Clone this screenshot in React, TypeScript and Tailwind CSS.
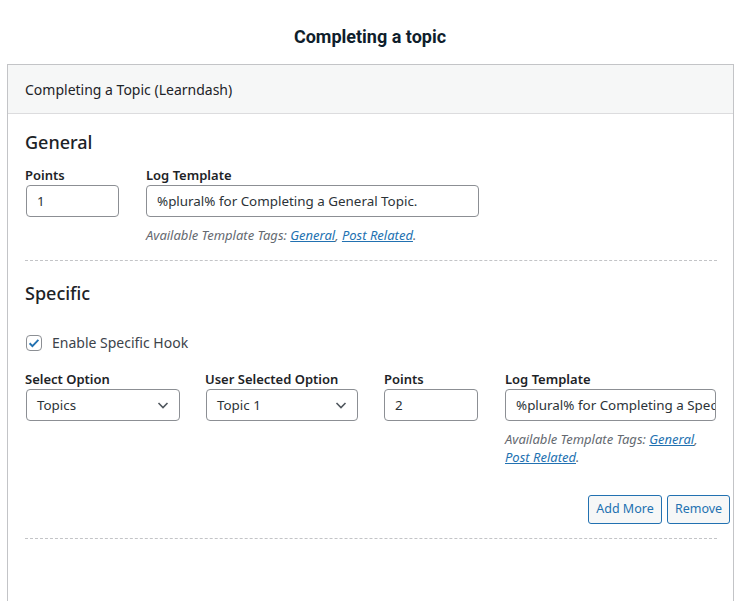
import React, { useState } from 'react';

const body = { fontFamily: '"Noto Sans", "Open Sans", sans-serif' };

const Chevron: React.FC = () => (
  <svg width="16" height="16" viewBox="0 0 16 16" className="text-[#50575e]">
    <path d="M3.5 6l4.5 4.5L12.5 6" fill="none" stroke="currentColor" strokeWidth="1.6" />
  </svg>
);

const Label: React.FC<{ children: React.ReactNode }> = ({ children }) => (
  <div className="text-[13px] font-semibold text-[#1d2327] leading-[18px]">{children}</div>
);

const TextBox: React.FC<{ value: string; className?: string }> = ({ value, className }) => (
  <div
    className={`h-[32px] border border-[#8c8f94] rounded-[4px] bg-white flex items-center px-[10px] text-[13.4px] text-[#2c3338] overflow-hidden whitespace-nowrap ${className ?? ''}`}
  >
    {value}
  </div>
);

const SelectBox: React.FC<{ value: string; className?: string }> = ({ value, className }) => (
  <div
    className={`h-[32px] border border-[#8c8f94] rounded-[4px] bg-white flex items-center justify-between pl-[10px] pr-[8px] text-[13.4px] text-[#2c3338] ${className ?? ''}`}
  >
    <span>{value}</span>
    <Chevron />
  </div>
);

const Tags: React.FC = () => (
  <p className="italic text-[13px] leading-[18px] text-[#646970]">
    Available Template Tags: <a className="text-[#2271b1] underline">General</a>,{' '}
    <a className="text-[#2271b1] underline">Post Related</a>.
  </p>
);

const App: React.FC = () => {
  const [enabled, setEnabled] = useState(true);

  return (
    <div className="w-[740px] h-[601px] bg-white overflow-hidden" style={body}>
      <h1
        className="text-center text-[18px] font-bold text-[#0f1e2c] pt-[23px] h-[64px]"
        style={{ fontFamily: 'Roboto, "Liberation Sans", sans-serif' }}
      >
        Completing a topic
      </h1>

      <div className="ml-[7px] w-[727px] border border-[#c3c4c7] bg-white h-[560px]">
        <div className="h-[49px] bg-[#f6f7f7] border-b border-[#dcdcde] flex items-center px-[17px]">
          <span className="text-[14px] text-[#1d2327]">Completing a Topic (Learndash)</span>
        </div>

        <div className="pl-[17px] pr-[16px]">
          <h2 className="text-[18px] font-medium text-[#1d2327] mt-[15px] leading-[26px]">General</h2>
          <div className="flex gap-[27px] mt-[11px]">
            <div>
              <Label>Points</Label>
              <TextBox value="1" className="w-[93px] mt-[1px] ml-[1px]" />
            </div>
            <div>
              <Label>Log Template</Label>
              <TextBox value="%plural% for Completing a General Topic." className="w-[333px] mt-[1px]" />
              <div className="mt-[9px]">
                <Tags />
              </div>
            </div>
          </div>

          <div className="border-t border-dashed border-[#c3c4c7] mt-[16px]" />

          <h2 className="text-[18px] font-medium text-[#1d2327] mt-[19px] leading-[26px]">Specific</h2>

          <label className="flex items-center gap-[10px] mt-[26px] ml-[1px] cursor-pointer">
            <span
              onClick={() => setEnabled(!enabled)}
              className="w-[16px] h-[16px] border border-[#8c8f94] rounded-[4px] bg-white flex items-center justify-center"
            >
              {enabled && (
                <svg width="14" height="14" viewBox="0 0 16 16">
                  <path d="M3 8.3l3.2 3.2L13 4.5" fill="none" stroke="#2271b1" strokeWidth="2.2" />
                </svg>
              )}
            </span>
            <span className="text-[14px] text-[#3c434a]">Enable Specific Hook</span>
          </label>

          <div className="flex mt-[17px]">
            <div className="w-[180px]">
              <Label>Select Option</Label>
              <SelectBox value="Topics" className="w-[154px] mt-[1px] ml-[1px]" />
            </div>
            <div className="w-[179px]">
              <Label>User Selected Option</Label>
              <SelectBox value="Topic 1" className="w-[152px] mt-[1px] ml-[1px]" />
            </div>
            <div className="w-[121px]">
              <Label>Points</Label>
              <TextBox value="2" className="w-[94px] mt-[1px]" />
            </div>
            <div className="w-[211px]">
              <Label>Log Template</Label>
              <TextBox value="%plural% for Completing a Specific Topic." className="w-[211px] mt-[1px]" />
              <div className="mt-[9px]">
                <Tags />
              </div>
            </div>
          </div>

          <div className="flex justify-end gap-[5px] mt-[29px] -mr-[13px]">
            <button className="h-[29px] w-[74px] border border-[#2271b1] rounded-[3px] bg-[#f6f7f7] text-[12.5px] text-[#2271b1]">
              Add More
            </button>
            <button className="h-[29px] w-[63px] border border-[#2271b1] rounded-[3px] bg-[#f6f7f7] text-[12.5px] text-[#2271b1]">
              Remove
            </button>
          </div>

          <div className="border-t border-dashed border-[#c3c4c7] mt-[14px]" />
        </div>
      </div>
    </div>
  );
};

export default App;
